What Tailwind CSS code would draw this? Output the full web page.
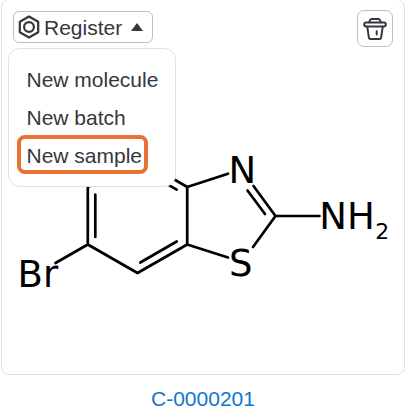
<!DOCTYPE html>
<html lang="en">
<head>
    <meta charset="UTF-8">
    <meta name="viewport" content="width=device-width, initial-scale=1.0">
    <title>C-0000201</title>
    <script src="https://cdn.jsdelivr.net/npm/@tailwindcss/browser@4"></script>
</head>
<body class="bg-white overflow-hidden font-['Liberation_Sans',Arial,sans-serif] text-[21px] leading-[38px] text-[#35373d]">
    <div class="relative -mt-px ml-px w-[404px] h-[376px] border border-[#e0e0e0] rounded-lg">
        <!-- Structure -->
        <svg class="absolute left-[-2px] top-0 w-[406px] h-[374px]" viewBox="0 0 406 374" fill="none" stroke="#000" stroke-width="2.7" stroke-linecap="round" stroke-linejoin="round">
            <path d="M187.2 187 137.5 158 87.8 187V244.5L137.5 273 187.2 244.5V187L228 173.7M187.2 244.5 228 257.5M253.5 186 275.5 216 253 247M275.5 216H319.5M55.5 263 87.8 244.5"/>
            <path d="M95.3 194.5V237M140.3 262.5 176.7 241.5M176.7 189.7 140.3 168.8M247.5 190.5 265 214"/>
            <g class="font-['DejaVu_Sans',sans-serif]" fill="#000" stroke="none" font-size="37">
                <text x="228.5" y="182.5">N</text>
                <text x="229" y="275.8">S</text>
                <text x="319.3" y="229">NH</text>
                <text x="375.3" y="239" font-size="22">2</text>
                <text x="17.6" y="286.7">Br</text>
            </g>
        </svg>

        <!-- Toolbar -->
        <div class="relative flex justify-between items-start pt-[10px] pl-[11px] pr-[11px]">
            <button type="button" class="flex items-center w-[140px] h-8 mt-px pl-1 bg-white border border-[#bfbfc2] rounded-md">
                <svg class="w-[22px] h-6" viewBox="0 0 22 24" fill="none" stroke="#35373d" stroke-width="2.2" stroke-linejoin="round">
                    <path d="M11 1.5 20.2 6.7V17.3L11 22.5 1.8 17.3V6.7Z"/>
                    <circle cx="11" cy="12" r="4.9"/>
                </svg>
                <span class="relative top-px ml-1">Register</span>
                <svg class="ml-[9px] w-3 h-2" viewBox="0 0 12 8" fill="#35373d"><path d="M6 0 12 8H0Z"/></svg>
            </button>
            <button type="button" class="flex items-center justify-center w-9 h-[37px] bg-white border border-[#bfbfc2] rounded-[7px]">
                <svg class="w-6 h-6" viewBox="0 0 24 24" fill="none" stroke="#35373d" stroke-width="2" stroke-linejoin="round" stroke-linecap="round">
                    <path d="M6.2 5.4 7.2 2.9Q7.6 1.9 8.6 1.9H15.4Q16.4 1.9 16.8 2.9L17.8 5.4"/>
                    <rect x="1.2" y="5.6" width="21.6" height="4" rx="2"/>
                    <path d="M4.3 9.8 5.9 20.6Q6.1 22 7.5 22H16.5Q17.9 22 18.1 20.6L19.7 9.8M13.7 14.2V17.6"/>
                </svg>
            </button>
        </div>

        <!-- Register menu -->
        <ul class="absolute left-[6px] top-[48px] w-[168px] h-[139px] pt-[12px] pl-[17.5px] bg-white border border-[#e0e0e0] rounded-xl">
            <li>New molecule</li>
            <li>New batch</li>
            <li class="relative">
                <span class="absolute -left-[9.5px] -top-[2px] w-[131px] h-[39px] border-4 border-[#e97132] rounded-lg"></span>
                <span class="relative">New sample</span>
            </li>
        </ul>
    </div>
    <div class="pt-[5px] text-center text-[#0f76cc] text-[21px]">C-0000201</div>
</body>
</html>
